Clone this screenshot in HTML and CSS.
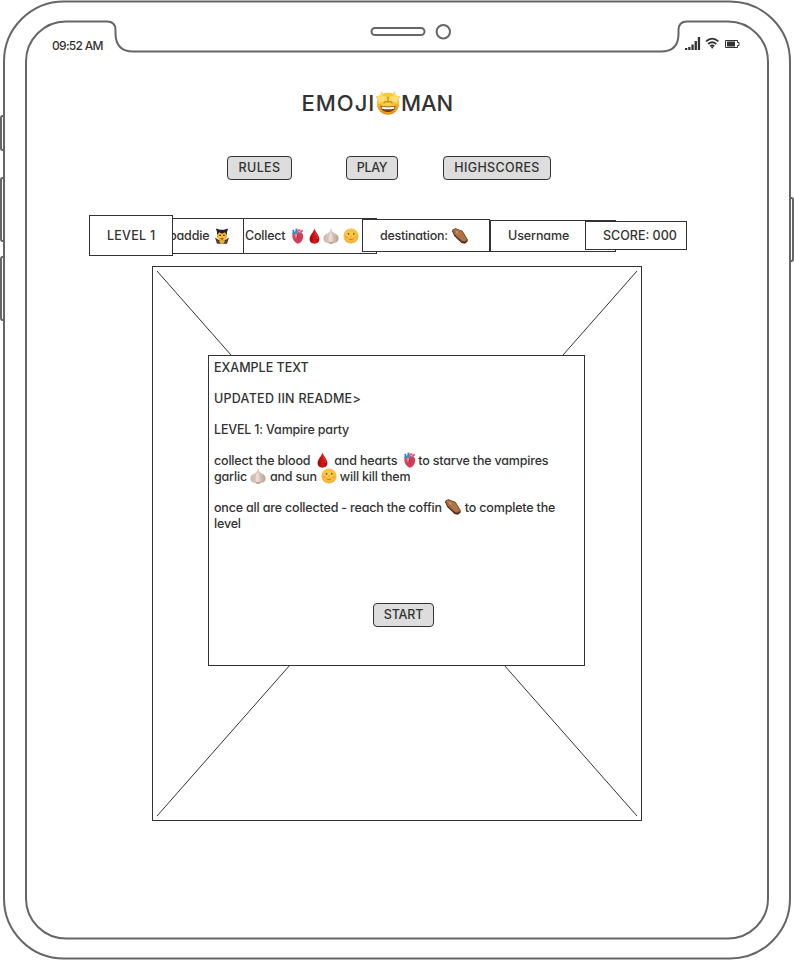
FILE: index.html
```
<!DOCTYPE html>
<html lang="en">
<head>
<meta charset="utf-8">
<title>Emoji Man</title>
<link rel="stylesheet" href="styles.css">
</head>
<body>
<svg class="defs" width="0" height="0" aria-hidden="true">
  <defs>
    <radialGradient id="gold" cx=".5" cy=".35" r=".65"><stop offset="0" stop-color="#ffe567"/><stop offset=".6" stop-color="#fdbb2b"/><stop offset="1" stop-color="#e98617"/></radialGradient>
    <radialGradient id="moonfill" cx=".5" cy=".4" r=".6"><stop offset="0" stop-color="#ffd34d"/><stop offset=".8" stop-color="#fbb93a"/><stop offset="1" stop-color="#f5a83c"/></radialGradient>
    <linearGradient id="blood" x2="1"><stop offset="0" stop-color="#8e0909"/><stop offset=".5" stop-color="#df1414"/><stop offset="1" stop-color="#a30808"/></linearGradient>
    <linearGradient id="clove" x2="1"><stop offset="0" stop-color="#c4aca0"/><stop offset=".45" stop-color="#eee0d8"/><stop offset="1" stop-color="#b59a8e"/></linearGradient>
  </defs>
  <symbol id="star-face" viewBox="0 0 24 24">
    <circle cx="12" cy="12.800" r="11" fill="url(#gold)"/>
    <path d="M4.500 14.500c3 1.300 12 1.300 15 0 .2 4.300-3.200 6.500-7.500 6.500s-7.700-2.200-7.500-6.500z" fill="#74411a"/>
    <path d="M5.500 15.400c3 1 10 1 13 0l-.4 2.300c-3 .8-9.200.8-12.200 0z" fill="#fff"/>
    <path d="M5.600.8l2 4.200 3.700.5-2.400 3.200 1 4.600-4.200-2.200-4 2.200.8-4.500L0 5.700l4.300-.9zM18.400.8l1.300 4 4.300.9-2.500 3.100.8 4.500-4-2.200-4.200 2.200 1-4.600-2.400-3.200 3.700-.5z" fill="#ffdf70" stroke="#f7bd3c" stroke-width=".6"/>
    <path d="M12 5.500v6M7.500 12c1.500-2 7.500-2 9 0" stroke="#c98a1c" stroke-width="1.300" fill="none"/>
  </symbol>
  <symbol id="vampire" viewBox="0 0 16 16">
    <path d="M1.800.6l4.500 1.200h3.400L14.200.6l-1.400 4-.4 5H3.600l-.4-5z" fill="#282627"/>
    <path d="M3 15.800L1 9.500l3.500 2.200h7L15 9.500l-2 6.300z" fill="#55393a"/>
    <ellipse cx="8" cy="8" rx="4.800" ry="5" fill="#f7bd2e"/>
    <path d="M3.100 6.800C3.300 3 5.300 2 8 2s4.700 1 4.900 4.800L10.700 4.300 8 5.800 5.300 4.300z" fill="#242124"/>
    <path d="M5.200 7.400h1.800M9 7.400h1.800" stroke="#5b3719" stroke-width="1.100"/>
    <path d="M6.300 10.200h3.400L9 11.400H7z" fill="#8c2c20"/>
    <path d="M4.700 12.800l3.300-.8 3.300.8-2 3H6.700z" fill="#eeb02b"/>
  </symbol>
  <symbol id="heart" viewBox="0 0 13 16">
    <path d="M3.200 5L2 1.800M1 5.500l3.500.4M5 5L5.600.7" stroke="#3b86c8" stroke-width="1.900" fill="none"/>
    <path d="M6.200 5.500C6 2.500 8 1.200 9.200 2.800M9 4.500l2.800-2" stroke="#df5568" stroke-width="1.800" fill="none"/>
    <path d="M1.500 7C3 4.300 6 4 8.500 4.200c3 .2 4 2.100 3.700 4.600-.3 3.300-2.300 6.300-4.800 6.900C4.500 15.800.7 10.800 1.500 7z" fill="#d5405a"/>
    <path d="M3.200 7c1-1.600 2.700-1.500 3.500-1L5 10.800z" fill="#ee8590"/>
    <path d="M7.500 5.500L6.300 9l1.500 4.500M7 8.500l3.200 2" stroke="#9b3350" stroke-width=".7" fill="none"/>
    <path d="M2 5.800l3.500-1.600 1.200 1.500" stroke="#4591cc" stroke-width="1.500" fill="none"/>
  </symbol>
  <symbol id="drop" viewBox="0 0 11 16">
    <path d="M5.500.5C6.400 4 10.400 7.500 10.400 11c0 2.900-2.200 4.700-4.900 4.700S.6 13.900.6 11C.6 7.500 4.600 4 5.500.5z" fill="url(#blood)"/>
    <path d="M6.500 5.500c1.500 2 2.200 3.800 1.800 5.500" stroke="#f45a50" stroke-width=".8" fill="none"/>
  </symbol>
  <symbol id="garlic" viewBox="0 0 16 16">
    <path d="M7.200.6l1.600.2c0 2.500.8 3.500 3.200 4.600 2.500 1.100 3.500 2.800 3.500 5 0 3-2.500 4.700-5 4.600-1.300.8-3.700.8-5 0-2.500.1-5-1.600-5-4.600 0-2.200 1.200-3.900 3.600-5C6.600 4.300 7.200 3 7.200.6z" fill="url(#clove)"/>
    <path d="M7.700 3.500C4.500 7.500 4 11 5.500 15M8.200 3.500c3.200 4 3.700 7.500 2.200 11.500" stroke="#bda29a" stroke-width=".5" fill="none"/>
    <path d="M5.500 14.500h5l-1 1.100h-3z" fill="#8d6c60"/>
  </symbol>
  <symbol id="moon" viewBox="0 0 16 16">
    <circle cx="8" cy="8" r="7.600" fill="url(#moonfill)"/>
    <ellipse cx="5.600" cy="5.800" rx=".8" ry="1.100" fill="#80521a"/><ellipse cx="10.800" cy="5.800" rx=".8" ry="1.100" fill="#80521a"/>
    <path d="M8.200 6.500v2.500l-1 .3" stroke="#e9a32a" stroke-width=".8" fill="none"/>
    <path d="M5.500 10.800c1.500.8 3.500.8 5 0" stroke="#b0741c" stroke-width=".9" fill="none"/>
    <circle cx="3.400" cy="9.300" r="1.300" fill="#f5932e" opacity=".5"/><circle cx="12.600" cy="9.300" r="1.300" fill="#f5932e" opacity=".5"/>
  </symbol>
  <symbol id="coffin" viewBox="0 0 16 16">
    <path d="M.2 3.200L.6 1.500 3.500.3l7 2.700 5.300 8.700-.3 2-2.800 2.100-3.200-.8L2.200 8z" fill="#4b2a1c"/>
    <path d="M.4 2L3.500.4l7 2.700 5.200 8.600-3 2.200-3.200-.6L2.500 6.700z" fill="#945c34"/>
    <path d="M1.600 2.300l2-1 6.400 2.500 4.500 7.700-2 1.500-2.500-.5-6.700-6.300z" fill="#ae7444"/>
    <path d="M4 4.500l2.400-.8M4.500 3l1.400 2.500" stroke="#d9ae5c" stroke-width=".7"/>
  </symbol>
</svg>

<div class="tablet">
  <svg class="frame" viewBox="0 0 794 960" aria-hidden="true">
    <g fill="none" stroke="#666" stroke-width="2">
      <path d="M64 1.500H730A60 60 0 0 1 790 61.500V898.500A60 60 0 0 1 730 958.500H64A60 60 0 0 1 4 898.500V61.500A60 60 0 0 1 64 1.500Z"/>
      <path d="M66 21.500H107Q115.500 21.500 115.500 30V34Q116 51.500 133 51.500H661Q678.500 51.500 678.500 34V30Q678.500 21.500 687 21.500H728A40 40 0 0 1 768 61.500V898.500A40 40 0 0 1 728 938.500H66A40 40 0 0 1 26 898.500V61.500A40 40 0 0 1 66 21.500Z"/>
      <rect x="371.500" y="28" width="53" height="7" rx="3.500"/>
      <circle cx="443.300" cy="31.700" r="6.700"/>
      <path d="M4 116H2.500Q1 116 1 118V148Q1 150 2.500 150H4M4 178H2.500Q1 178 1 180V239Q1 241 2.500 241H4M4 257H2.500Q1 257 1 259V318Q1 320 2.500 320H4M790 198H791.500Q793 198 793 200V259Q793 261 791.500 261H790"/>
    </g>
  </svg>

  <header class="status">
    <span class="time">09:52 AM</span>
    <svg class="indicators" width="57" height="14" viewBox="0 0 57 14" fill="#333">
      <path d="M0 11h2.300v2H0zM3.200 10h2.300v3H3.200zM6.400 7.500h2.300V13H6.400zM9.600 4h2.300v9H9.600zM12.800 0h2.300v13h-2.300z"/>
      <g fill="none" stroke="#333" stroke-width="1.800"><path d="M21 4.400q6.200-5.600 12.400 0M23.200 7q4-3.500 8 0M25.200 9.400q2-1.700 4 0"/></g>
      <circle cx="27.200" cy="10.500" r="1"/>
      <path d="M40.500 3.500h12V5.500h1.500v3h-1.500v2h-12z" fill="none" stroke="#333"/>
      <path d="M42 4.500h8v5h-8z"/>
    </svg>
  </header>

  <h1 class="title"><span class="emoji-word">EMOJI</span><svg class="star"><use href="#star-face"/></svg><span>MAN</span></h1>

  <nav class="menu">
    <button class="btn rules">RULES</button>
    <button class="btn play">PLAY</button>
    <button class="btn scores">HIGHSCORES</button>
  </nav>

  <section class="stats">
    <div class="cell level">LEVEL 1</div>
    <div class="cell baddie">baddie<svg class="ico"><use href="#vampire"/></svg></div>
    <div class="cell collect">Collect<svg class="ico slim"><use href="#heart"/></svg><svg class="ico thin"><use href="#drop"/></svg><svg class="ico"><use href="#garlic"/></svg><svg class="ico moon"><use href="#moon"/></svg></div>
    <div class="cell destination">destination:<svg class="ico"><use href="#coffin"/></svg></div>
    <div class="cell username">Username</div>
    <div class="cell score">SCORE: 000</div>
  </section>

  <main class="board">
    <svg class="cross" viewBox="0 0 488 553" aria-hidden="true"><path d="M4 4L484 549M484 4L4 549" stroke="#333" fill="none"/></svg>
    <section class="dialog">
      <p class="caps">EXAMPLE TEXT</p>
      <p class="caps wide">UPDATED IIN README&gt;</p>
      <p>LEVEL 1: Vampire party</p>
      <p>collect the blood<svg class="ico thin d1"><use href="#drop"/></svg>and hearts<svg class="ico slim h1"><use href="#heart"/></svg>to starve the vampires<br>garlic<svg class="ico g1"><use href="#garlic"/></svg>and sun<svg class="ico m1"><use href="#moon"/></svg>will kill them</p>
      <p>once all are collected - reach the coffin<svg class="ico c1"><use href="#coffin"/></svg>to complete the<br>level</p>
      <button class="btn start">START</button>
    </section>
  </main>
</div>
</body>
</html>
```
FILE: styles.css
```
* { box-sizing: border-box; }
body {
  margin: 0;
  background: #fff;
  color: #333;
  font: 500 12.5px/15.6px Inter, "Liberation Sans", sans-serif;
  font-feature-settings: "cv11" 1;
  letter-spacing: -0.18px;
}
.defs { position: absolute; }
.tablet { position: relative; width: 794px; height: 960px; overflow: hidden; }
.frame { position: absolute; inset: 0; width: 794px; height: 960px; }
.tablet > :not(.frame) { position: relative; }

.status { display: flex; justify-content: space-between; height: 51px; padding: 37px 52px 0; }
.time { font-size: 12px; line-height: 17px; letter-spacing: -0.7px; }

.title {
  display: flex;
  align-items: center;
  height: 30px;
  margin: 37px 0 0 301.5px;
  font-size: 22px;
  line-height: 30px;
  font-weight: 500;
  letter-spacing: -0.1px;
}
.emoji-word { width: 74.5px; letter-spacing: 1px; }
.star { width: 24px; height: 24px; margin-right: 1px; }

.menu { display: flex; height: 24px; margin: 38px 0 0 227px; }
.btn {
  height: 24px;
  padding: 0;
  border: 1px solid #333;
  border-radius: 4px;
  background: #ddd;
  color: inherit;
  font: inherit;
  font-feature-settings: inherit;
  letter-spacing: 0.35px;
  text-align: center;
}
.rules { width: 65px; }
.play { width: 52px; margin-left: 54px; letter-spacing: -0.3px; }
.scores { width: 108px; margin-left: 45px; }

.stats { display: flex; align-items: flex-start; height: 41px; margin: 35px 0 0 89px; }
.cell {
  position: relative;
  display: flex;
  align-items: center;
  flex: none;
  white-space: nowrap;
  border: 1px solid #333;
  background: #fff;
}
.level { z-index: 2; width: 84px; height: 41px; padding-left: 17px; letter-spacing: 0.25px; }
.baddie { width: 94px; height: 36px; margin: 3px 0 0 -23px; padding-left: 18px; }
.baddie .ico { margin-left: 5px; }
.collect { width: 134px; height: 36px; margin: 3px 0 0 -1px; padding-left: 1px; letter-spacing: -0.2px; }
.collect .slim { margin-left: 6px; }
.collect .thin { margin: 0 3px 0 5px; }
.collect .moon { margin-left: 4px; }
.destination { z-index: 1; width: 128px; height: 33px; margin: 4px 0 0 -15px; padding-left: 17px; letter-spacing: -0.24px; }
.destination .ico { margin-left: 4px; }
.username { width: 126px; height: 32px; margin-top: 5px; padding-left: 17px; letter-spacing: -0.1px; }
.score { z-index: 1; width: 102px; height: 29px; margin: 6px 0 0 -31px; padding-left: 17px; letter-spacing: 0; }

.ico { flex: none; width: 16px; height: 16px; vertical-align: -3px; }
.slim { width: 13px; }
.thin { width: 11px; }

.board { display: grid; width: 490px; height: 555px; margin: 10px 0 0 152px; border: 1px solid #333; }
.cross { grid-area: 1 / 1; width: 488px; height: 553px; }
.dialog {
  z-index: 1;
  grid-area: 1 / 1;
  width: 377px;
  height: 311px;
  margin: 88px 0 0 55px;
  padding: 4px 5px;
  border: 1px solid #333;
  background: #fff;
  white-space: nowrap;
}
.dialog p { margin: 0 0 15.5px; }
.dialog .caps { letter-spacing: 0; }
.dialog .wide { letter-spacing: 0.26px; }
.dialog .ico { margin-top: -4px; }
.d1 { margin: 0 6px 0 7px; }
.h1 { margin: 0 2px 0 6px; }
.slim.h1 { width: 13px; }
.g1 { margin: 0 4px 0 3px; }
.m1 { margin: 0 3px 0 4px; }
.c1 { margin: 0 4px 0 3px; }
.start { display: block; width: 61px; margin: 72px 0 0 159px; letter-spacing: -0.2px; }
```
